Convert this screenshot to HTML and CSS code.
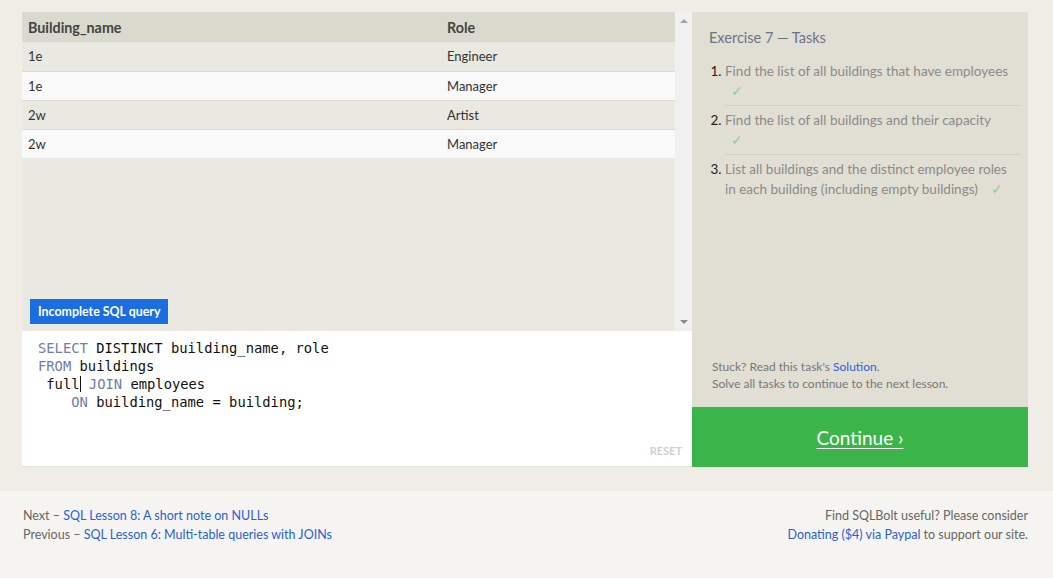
FILE: index.html
```html
<!DOCTYPE html>
<html>
<head>
<meta charset="utf-8">
<link rel="stylesheet" href="styles.css">
</head>
<body>
<div class="page">
  <div class="main">
    <div class="left">
      <div class="results">
        <div class="table-wrap">
          <table class="table">
            <thead>
              <tr><th class="c1">Building_name</th><th>Role</th></tr>
            </thead>
            <tbody>
              <tr class="odd"><td>1e</td><td>Engineer</td></tr>
              <tr class="even"><td>1e</td><td>Manager</td></tr>
              <tr class="odd"><td>2w</td><td>Artist</td></tr>
              <tr class="even"><td>2w</td><td>Manager</td></tr>
            </tbody>
          </table>
        </div>
        <div class="scrollbar">
          <span class="arrow up"></span>
          <span class="arrow down"></span>
        </div>
        <div class="badge">Incomplete SQL query</div>
      </div>
      <div class="editor">
        <pre class="code"><span class="kw">SELECT</span> DISTINCT building_name, role
<span class="kw">FROM</span> buildings
 full<span class="cursor"></span> <span class="kw">JOIN</span> employees
    <span class="kw">ON</span> building_name = building;</pre>
        <div class="reset">RESET</div>
      </div>
    </div>
    <div class="right">
      <div class="tasks">
        <div class="tasks-title">Exercise 7 — Tasks</div>
        <ol class="task-list">
          <li><span class="task-text">Find the list of all buildings that have employees <span class="check block">✓</span></span></li>
          <li><span class="task-text">Find the list of all buildings and their capacity <span class="check block">✓</span></span></li>
          <li class="last"><span class="task-text">List all buildings and the distinct employee roles in each building (including empty buildings) &nbsp; <span class="check">✓</span></span></li>
        </ol>
        <div class="spacer"></div>
        <div class="stuck">
          <div>Stuck? Read this task's <a class="link">Solution</a>.</div>
          <div>Solve all tasks to continue to the next lesson.</div>
        </div>
      </div>
      <div class="continue"><a class="continue-link">Continue ›</a></div>
    </div>
  </div>
  <div class="footer">
    <div class="foot-left">
      <div>Next – <a class="link">SQL Lesson 8: A short note on NULLs</a></div>
      <div>Previous – <a class="link">SQL Lesson 6: Multi-table queries with JOINs</a></div>
    </div>
    <div class="foot-right">
      <div>Find SQLBolt useful? Please consider</div>
      <div><a class="link">Donating ($4) via Paypal</a> to support our site.</div>
    </div>
  </div>
</div>
</body>
</html>
```
FILE: styles.css
```css
* { box-sizing: border-box; }
html, body { margin: 0; padding: 0; }
body {
  background: #efede6;
  font-family: Lato, "Open Sans", sans-serif;
  color: #555;
  width: 1053px;
  height: 578px;
  overflow: hidden;
}
.page { display: flex; flex-direction: column; height: 578px; }
.main {
  display: flex;
  margin: 12px 25px 0 22px;
  height: 455px;
}
.left { width: 670px; display: flex; flex-direction: column; }
.results {
  position: relative;
  height: 319px;
  background: #e9e8e1;
  display: flex;
}
.table-wrap { flex: 1; }
.table {
  width: 100%;
  border-collapse: collapse;
  font-size: 13px;
}
.table th {
  background: #dad9cd;
  text-align: left;
  font-weight: 700;
  font-size: 14.3px;
  color: #444;
  height: 30px;
  padding: 0 6px;
}
.table th.c1 { width: 419px; }
.table td {
  height: 29px;
  padding: 0 6px;
  color: #333;
  border-top: 1px solid #dcdbd3;
}
.table tr.odd td { background: #e9e8e1; }
.table tr.even td { background: #f9f9f9; }
.table tbody tr:first-child td { border-top: none; }
.scrollbar {
  width: 17px;
  background: #f0f0f0;
  position: relative;
}
.arrow {
  position: absolute;
  left: 5px;
  width: 0; height: 0;
  border-left: 4px solid transparent;
  border-right: 4px solid transparent;
}
.arrow.up { top: 7px; border-bottom: 4px solid #a3a3a3; }
.arrow.down { bottom: 7px; border-top: 4px solid #8a8a8a; }
.badge {
  position: absolute;
  left: 8px;
  bottom: 7px;
  height: 25px;
  padding: 0 8px;
  line-height: 25px;
  background: #1c6ee0;
  color: #fff;
  font-size: 12.4px;
  font-weight: 700;
}
.editor {
  position: relative;
  height: 136px;
  background: #fff;
  border-bottom: 1px solid #e2e0d8;
}
.code {
  margin: 0;
  padding: 8px 0 0 16px;
  font-family: "DejaVu Sans Mono", "Liberation Mono", monospace;
  font-size: 13.8px;
  line-height: 18px;
  color: #111;
}
.kw { color: #6e7ea6; }
.cursor {
  display: inline-block;
  width: 1px;
  height: 16px;
  background: #111;
  vertical-align: -3px;
}
.reset {
  position: absolute;
  right: 10px;
  bottom: 9px;
  font-size: 11px;
  font-weight: 700;
  color: #cfcfcf;
}
.right { width: 336px; display: flex; flex-direction: column; }
.tasks {
  height: 395px;
  background: #e1dfd4;
  display: flex;
  flex-direction: column;
  padding: 17px 7px 15px 17px;
}
.tasks-title {
  font-size: 14.5px;
  color: #6a7286;
  line-height: 18px;
}
.task-list {
  margin: 10px 0 0 0;
  padding: 0 0 0 16px;
  font-size: 13.5px;
  line-height: 20px;
}
.task-list li {
  padding: 4px 0;
  border-bottom: 1px solid #d3d1c5;
  color: #333;
}
.task-list li.last { border-bottom: none; }
.task-list li::marker { font-weight: 400; color: #222; }
.task-text { color: #8a8a8a; }
.check { color: #8ccf8c; padding-left: 3px; }
.check.block { display: block; padding-left: 6px; }
.spacer { flex: 1; }
.stuck {
  font-size: 12px;
  line-height: 17px;
  color: #777;
  padding-left: 3px;
}
.link { color: #2b5fd9; text-decoration: none; }
.continue {
  height: 60px;
  background: #3bb54a;
  display: flex;
  align-items: center;
  justify-content: center;
}
.continue-link {
  color: #fff;
  font-size: 19px;
  text-decoration: underline;
  text-underline-offset: 3px;
}
.footer {
  margin-top: 24px;
  flex: 1;
  background: #f5f4f0;
  display: flex;
  justify-content: space-between;
  padding: 15px 25px 0 23px;
  font-size: 12.5px;
  line-height: 19px;
  color: #666;
}
.foot-right { text-align: right; }
```
